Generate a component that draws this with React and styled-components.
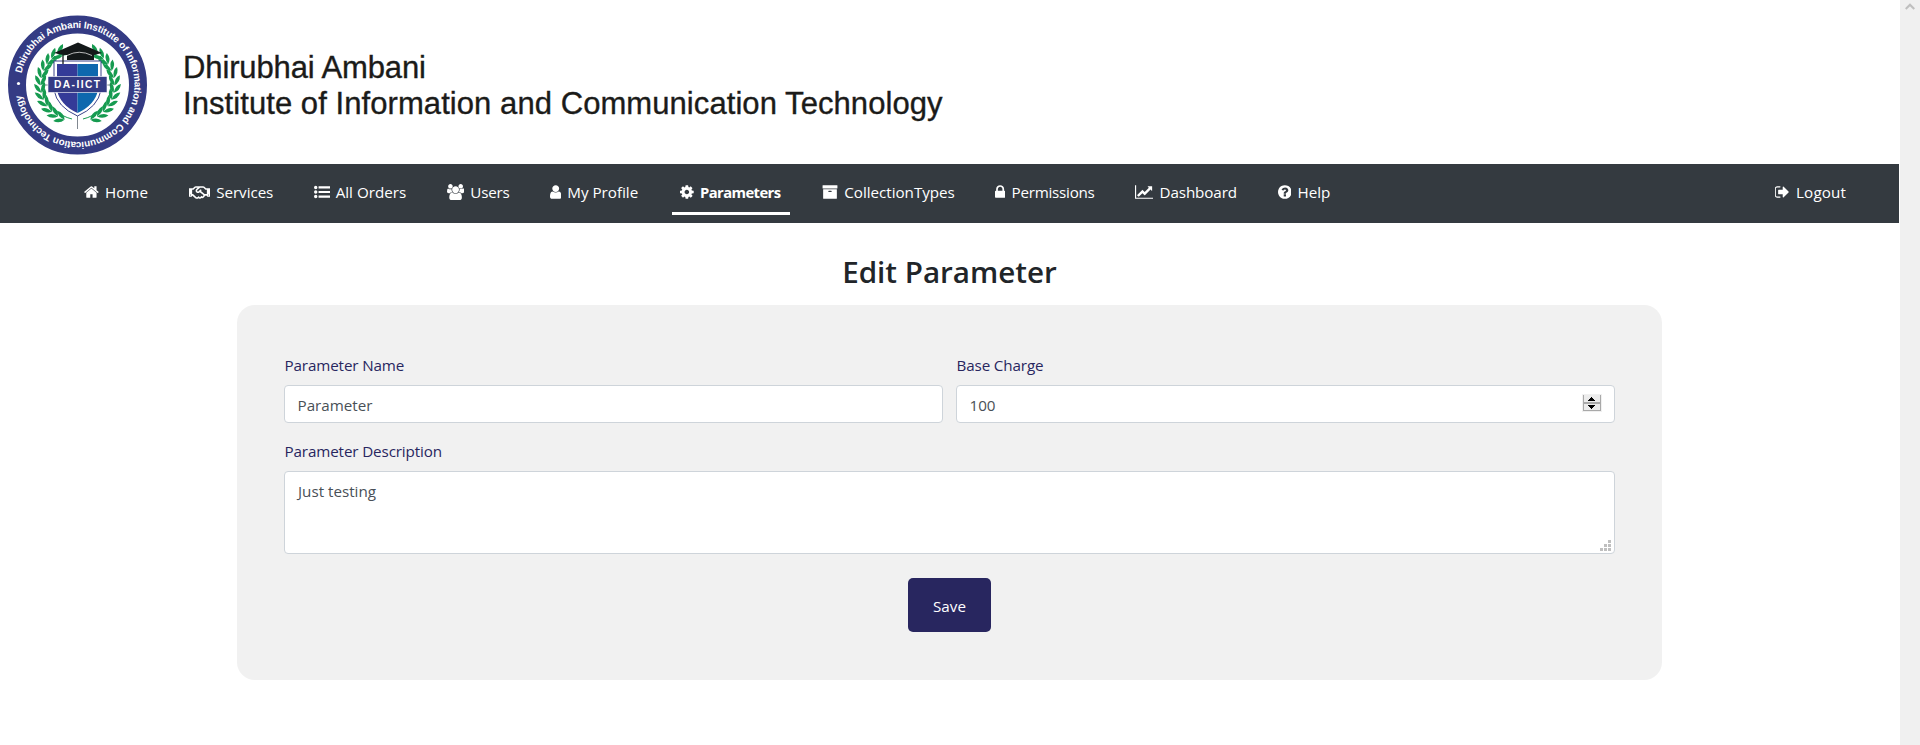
import React from "react";
import styled, { createGlobalStyle } from "styled-components";
import { FaRegHandshake } from "react-icons/fa";

const GlobalStyle = createGlobalStyle`
  *, *::before, *::after { box-sizing: border-box; }
  body {
    margin: 0;
    background: #fff;
    color: #212529;
    font-family: "Segoe UI", "Open Sans", "Noto Sans", sans-serif;
    font-size: 15.2px;
    line-height: 24px;
    overflow: hidden;
  }
`;

const Shell = styled.div`
  display: flex;
  height: 745px;
`;

const Page = styled.div`
  flex: 1;
  min-width: 0;
`;

const ScrollTrack = styled.div`
  display: flex;
  justify-content: center;
  flex: 0 0 21px;
  padding-top: 3px;
  background: #f0f0f0;
  border-left: 1px solid #fff;
`;

const Header = styled.header`
  display: flex;
  height: 164px;
`;

const Emblem = styled.svg`
  flex: 0 0 160px;
  height: 164px;
`;

const SchoolName = styled.h1`
  margin: 50px 0 0 23px;
  color: #1b1b19;
  font: 400 31px/35.5px "Liberation Sans", Arial, sans-serif;
  -webkit-text-stroke: 0.35px #1b1b19;
  white-space: nowrap;
`;

const NameLine = styled.span`
  display: block;
  letter-spacing: ${(p) => p.$spacing}px;
`;

const Nav = styled.nav`
  display: flex;
  gap: 24px;
  height: 59px;
  padding: 8px 43px 8px 76px;
  background: #343a40;
`;

const NavLink = styled.a`
  display: flex;
  align-items: center;
  flex: 0 0 ${(p) => p.$width + 16}px;
  height: 43px;
  padding: 0 8px;
  margin-left: ${(p) => (p.$end ? "auto" : 0)};
  border-bottom: 3px solid ${(p) => (p.$active ? "#fff" : "transparent")};
  color: #fff;
  font-weight: ${(p) => (p.$active ? 700 : 400)};
  font-size: ${(p) => (p.$active ? 14.8 : 15.2)}px;
  letter-spacing: ${(p) => p.$spacing || 0}px;
  line-height: 24px;
  white-space: nowrap;
  text-decoration: none;

  svg {
    flex: none;
    margin: 0 6.2px 0 0;
    fill: currentColor;
  }
`;

const Main = styled.main`
  padding: 29px 237px 0;
`;

const Heading = styled.h2`
  margin: 0 0 14px;
  font-size: 29.6px;
  font-weight: 600;
  line-height: 39px;
  text-align: center;
`;

const Card = styled.form`
  display: grid;
  grid-template-columns: 1fr 1fr;
  column-gap: 13px;
  row-gap: 16px;
  height: 375px;
  align-content: start;
  padding: 48px 47px;
  border-radius: 18px;
  background: #f1f1f1;
`;

const Field = styled.div`
  display: flex;
  flex-direction: column;
  grid-column: ${(p) => (p.$wide ? "1 / -1" : "auto")};
`;

const Label = styled.label`
  height: 24px;
  margin-bottom: 8px;
  padding-left: 0.5px;
  color: #28265f;
  letter-spacing: -0.12px;
`;

const Control = styled.div`
  display: flex;
  justify-content: space-between;
  align-items: ${(p) => (p.$area ? "flex-start" : "center")};
  height: ${(p) => (p.$area ? 83 : 38)}px;
  padding: ${(p) => (p.$area ? "7px 3px 2px 13px" : "1px 12px 0 12.500px")};
  border: 1px solid #ced4da;
  border-radius: 4px;
  background: #fff;
  color: #495057;
`;

const Grip = styled.svg`
  align-self: flex-end;
`;

const Spinner = styled.svg`
  margin-top: -3px;
`;

const SaveButton = styled.button`
  grid-column: 1 / -1;
  justify-self: center;
  width: 83px;
  height: 54px;
  margin-top: 8px;
  padding: 2px 0 0;
  border: 0;
  border-radius: 5px;
  background: #28265f;
  color: #fff;
  font: inherit;
`;

const icons = {
  home: { x: 64, w: 1664, d: "M1472 992v480q0 26-19 45t-45 19h-384v-384h-256v384h-384q-26 0-45-19t-19-45v-480q0-1 .5-3t.5-3l575-474 575 474q1 2 1 6zm223-69l-62 74q-8 9-21 11h-3q-13 0-21-7l-692-577-692 577q-12 8-24 7-13-2-21-11l-62-74q-8-10-7-23.5t11-21.5l719-599q32-26 76-26t76 26l244 204v-195q0-14 9-23t23-9h192q14 0 23 9t9 23v408l219 182q10 8 11 21.5t-7 23.5z" },
  list: { x: 0, w: 1792, d: "M0 384a192 192 0 1 0 384 0a192 192 0 1 0-384 0M0 896a192 192 0 1 0 384 0a192 192 0 1 0-384 0M0 1408a192 192 0 1 0 384 0a192 192 0 1 0-384 0M512 264h1280v240h-1280zM512 776h1280v240h-1280zM512 1288h1280v240h-1280z" },
  users: { x: -64, w: 1920, d: "M529 896q-162 5-265 128h-134q-82 0-138-40.5t-56-118.5q0-353 124-353 6 0 43.5 21t97.5 42.5 119 21.5q67 0 133-23-5 37-5 66 0 159 90 294zm1071 637q0 120-73 189.5t-194 69.5h-874q-121 0-194-69.5t-73-189.5q0-53 3.5-103.5t14-109 26.5-108.5 43-97.5 62-81 85.5-53.5 111.5-20q10 0 43 21.5t73 48 107 48 135 21.5 135-21.5 107-48 73-48 43-21.5q61 0 111.5 20t85.5 53.5 62 81 43 97.5 26.5 108.5 14 109 3.5 103.5zm-1024-1277q0 106-75 181t-181 75-181-75-75-181 75-181 181-75 181 75 75 181zm704 384q0 159-112.5 271.5t-271.5 112.5-271.5-112.5-112.5-271.5 112.5-271.5 271.5-112.5 271.5 112.5 112.5 271.5zm576 225q0 78-56 118.5t-138 40.5h-134q-103-123-265-128 90-135 90-294 0-29-5-66 66 23 133 23 59 0 119-21.5t97.5-42.5 43.5-21q124 0 124 353zm-128-609q0 106-75 181t-181 75-181-75-75-181 75-181 181-75 181 75 75 181z" },
  user: { x: 256, w: 1280, d: "M1536 1399q0 109-62.5 187t-150.5 78h-854q-88 0-150.5-78t-62.5-187q0-85 8.5-160.5t31.5-152 58.5-131 94-89 134.5-34.5q131 128 313 128t313-128q76 0 134.5 34.5t94 89 58.5 131 31.5 152 8.5 160.5zm-256-887q0 159-112.5 271.5t-271.5 112.5-271.5-112.5-112.5-271.5 112.5-271.5 271.5-112.5 271.5 112.5 112.5 271.5z" },
  cog: { x: 128, w: 1536, d: "M1152 896q0-106-75-181t-181-75-181 75-75 181 75 181 181 75 181-75 75-181zm512-109v222q0 12-8 23t-20 13l-185 28q-19 54-39 91 35 50 107 138 10 12 10 25t-9 23q-27 37-99 108t-94 71q-12 0-26-9l-138-108q-44 23-91 38-16 136-29 186-7 28-36 28h-222q-14 0-24.5-8.5t-11.5-21.5l-28-184q-49-16-90-37l-141 107q-10 9-25 9-14 0-25-11-126-114-165-168-7-10-7-23 0-12 8-23 15-21 51-66.5t54-70.5q-27-50-41-99l-183-27q-13-2-21-12.5t-8-23.5v-222q0-12 8-23t19-13l186-28q14-46 39-92-40-57-107-138-10-12-10-24 0-10 9-23 26-36 98.5-107.5t94.5-71.5q13 0 26 10l138 107q44-23 91-38 16-136 29-186 7-28 36-28h222q14 0 24.5 8.5t11.5 21.5l28 184q49 16 90 37l142-107q9-9 24-9 13 0 25 10 129 119 165 170 7 8 7 22 0 12-8 23-15 21-51 66.5t-54 70.5q26 50 41 98l183 28q13 2 21 12.5t8 23.5z" },
  archive: { x: 0, w: 1792, d: "M1088 832q0-26-19-45t-45-19h-256q-26 0-45 19t-19 45 19 45 45 19h256q26 0 45-19t19-45zm576-192v960q0 26-19 45t-45 19h-1408q-26 0-45-19t-19-45v-960q0-26 19-45t45-19h1408q26 0 45 19t19 45zm64-448v256q0 26-19 45t-45 19h-1536q-26 0-45-19t-19-45v-256q0-26 19-45t45-19h1536q26 0 45 19t19 45z" },
  lock: { x: 320, w: 1152, d: "M640 768h512v-192q0-106-75-181t-181-75-181 75-75 181v192zm832 96v576q0 40-28 68t-68 28h-960q-40 0-68-28t-28-68v-576q0-40 28-68t68-28h32v-192q0-184 132-316t316-132 316 132 132 316v192h32q40 0 68 28t28 68z" },
  chart: { x: -128, w: 2048, d: "M1920 1536v128h-2048v-1536h128v1408h1920zm-128-1248v435q0 21-19.5 29.5t-35.5-7.5l-121-121-633 633q-10 10-23 10t-23-10l-233-233-416 416-192-192 585-585q10-10 23-10t23 10l233 233 464-464-121-121q-16-16-7.5-35.5t29.5-19.5h435q14 0 23 9t9 23z" },
  help: { x: 128, w: 1536, d: "M1024 1376v-192q0-14-9-23t-23-9h-192q-14 0-23 9t-9 23v192q0 14 9 23t23 9h192q14 0 23-9t9-23zm256-672q0-88-55.5-163t-138.5-116-170-41q-243 0-371 213-15 24 8 42l132 100q7 6 19 6 16 0 25-12 53-68 86-92 34-24 86-24 48 0 85.5 26t37.5 59q0 38-20 61t-68 45q-63 28-115.5 86.5t-52.5 125.5v36q0 14 9 23t23 9h192q14 0 23-9t9-23q0-19 21.5-49.5t54.5-49.5q32-18 49-28.5t46-35 44.5-48 28-60.5 12.5-81zm384 192q0 209-103 385.5t-279.5 279.5-385.5 103-385.5-103-279.5-279.5-103-385.5 103-385.5 279.5-279.5 385.5-103 385.5 103 279.5 279.5 103 385.5z" },
  logout: { x: 96, w: 1664, d: "M704 1440q0 4 1 20t.5 26.5-3 23.5-10 19.5-20.5 6.5h-320q-119 0-203.5-84.5t-84.5-203.5v-704q0-119 84.5-203.5t203.5-84.5h320q13 0 22.5 9.5t9.5 22.5q0 4 1 20t.5 26.5-3 23.5-10 19.5-20.5 6.5h-320q-66 0-113 47t-47 113v704q0 66 47 113t113 47h312l11.5 1 11.5 3 8 5.5 7 9 2 13.5zm928-544q0 26-19 45l-544 544q-19 19-45 19t-45-19-19-45v-288h-448q-26 0-45-19t-19-45v-384q0-26 19-45t45-19h448v-288q0-26 19-45t45-19 45 19l544 544q19 19 19 45z" },
};

function Icon({ name }) {
  if (name === "handshake") return <FaRegHandshake size={21} />;
  const { x, w, d } = icons[name];
  return (
    <svg width={(w * 16) / 1792} height="16" viewBox={`${x} 0 ${w} 1792`}>
      <path d={d} />
    </svg>
  );
}

const links = [
  { icon: "home", text: "Home", width: 65 },
  { icon: "handshake", text: "Services", width: 84.5, spacing: -0.05 },
  { icon: "list", text: "All Orders", width: 93.5 },
  { icon: "users", text: "Users", width: 62.5, spacing: -0.2 },
  { icon: "user", text: "My Profile", width: 90.5 },
  { icon: "cog", text: "Parameters", width: 102, active: true, spacing: -0.6 },
  { icon: "archive", text: "CollectionTypes", width: 133, spacing: -0.03 },
  { icon: "lock", text: "Permissions", width: 100, spacing: -0.25 },
  { icon: "chart", text: "Dashboard", width: 102.5, spacing: -0.12 },
  { icon: "help", text: "Help", width: 54 },
  { icon: "logout", text: "Logout", width: 73, end: true, spacing: 0.15 },
];

// Leaf positions down the left branch of the laurel; the right branch mirrors it.
const leaves = Array.from({ length: 12 }, (_, i) => {
  const a = ((112 + i * 11.5) * Math.PI) / 180;
  return { x: 77.5 + 37 * Math.cos(a), y: 85 + 37 * Math.sin(a), deg: (a * 180) / Math.PI + 90 };
});

function Branch() {
  return (
    <g fill="#169b50">
      <path d="M72 119A37 37 0 0 1 55 56" fill="none" stroke="#169b50" strokeWidth="1" />
      {leaves.map((l) => (
        <g key={l.deg} transform={`translate(${l.x} ${l.y}) rotate(${l.deg})`}>
          <path d="M-1 0Q2-6 9-5.500Q7 0 -1 0Z" />
          <path d="M-1 0Q2 6 9 5.500Q7 0 -1 0Z" />
        </g>
      ))}
    </g>
  );
}

function Logo() {
  return (
    <Emblem width="160" height="164" viewBox="0 0 160 164">
      <defs>
        <path id="ring" d="M20.500 85A57 57 0 0 1 134.500 85A57 57 0 0 1 20.500 85" />
      </defs>
      <circle cx="77.500" cy="85" r="60.500" fill="#fff" stroke="#343b84" strokeWidth="18" />
      <text fill="#fff" fontFamily="Liberation Sans, Arial, sans-serif" fontWeight="700" fontSize="9.800">
        <textPath href="#ring" startOffset="11.500" textLength="336" lengthAdjust="spacing">
          Dhirubhai Ambani Institute of Information and Communication Technology
        </textPath>
      </text>
      <circle cx="18.500" cy="83.500" r="1.600" fill="#fff" />
      <Branch />
      <g transform="translate(155 0) scale(-1 1)">
        <Branch />
      </g>
      <path d="M77.500 112V129M45 85H111" stroke="#4a5560" strokeWidth="0.700" />
      <path d="M54 61H101V90Q98 107 77.500 116Q57 107 54 90Z" fill="#fff" stroke="#3b4389" strokeWidth="1" />
      <path d="M57 64H77.500V113Q60 105 57 90Z" fill="#343b98" />
      <path d="M77.500 64H98V90Q95 105 77.500 113Z" fill="#0d68ae" />
      <path d="M78 42.500L102 53L94 55V60H67V55L61 54.500L54 53Z" fill="#131819" />
      <path d="M67 55.500Q79 49 92 55.500" fill="none" stroke="#fff" strokeWidth="0.700" />
      <path d="M78 50L63 55V64" fill="none" stroke="#131819" strokeWidth="1.300" />
      <rect x="48" y="76.500" width="59" height="16" fill="#343b84" stroke="#fff" strokeWidth="0.600" />
      <text x="54" y="87.800" fill="#fff" fontFamily="Liberation Sans, Arial, sans-serif" fontWeight="700" fontSize="10.200" textLength="46">
        DA-IICT
      </text>
    </Emblem>
  );
}

export default function App() {
  return (
    <>
      <GlobalStyle />
      <Shell>
        <Page>
          <Header>
            <Logo />
            <SchoolName>
              <NameLine $spacing={-0.12}>Dhirubhai Ambani</NameLine>
              <NameLine $spacing={0.07}>Institute of Information and Communication Technology</NameLine>
            </SchoolName>
          </Header>
          <Nav>
            {links.map((l) => (
              <NavLink key={l.text} $width={l.width} $active={l.active} $end={l.end} $spacing={l.spacing}>
                <Icon name={l.icon} />
                {l.text}
              </NavLink>
            ))}
          </Nav>
          <Main>
            <Heading>Edit Parameter</Heading>
            <Card>
              <Field>
                <Label>Parameter Name</Label>
                <Control>Parameter</Control>
              </Field>
              <Field>
                <Label>Base Charge</Label>
                <Control>
                  100
                  <Spinner width="20" height="18" viewBox="0 0 20 18" shapeRendering="crispEdges">
                    <rect width="20" height="18" fill="#f0f0f0" />
                    <path d="M1.500 1V16.500H18.500V1" fill="#ececec" stroke="#a9a9a9" />
                    <rect x="1" y="8" width="18" height="2" fill="#a9a9a9" />
                    <path d="M6 7V6H7V5H8V4H9V3H10V4H11V5H12V6H13V7ZM6 11H13V12H12V13H11V14H10V15H9V14H8V13H7V12H6Z" fill="#000" />
                  </Spinner>
                </Control>
              </Field>
              <Field $wide>
                <Label>Parameter Description</Label>
                <Control $area>
                  Just testing
                  <Grip width="11" height="11" viewBox="0 0 11 11">
                    <path d="M8 0h3v3h-3zM4 4h3v3h-3zM8 4h3v3h-3zM0 8h3v3h-3zM4 8h3v3h-3zM8 8h3v3h-3z" fill="#bfbfbf" />
                  </Grip>
                </Control>
              </Field>
              <SaveButton type="button">Save</SaveButton>
            </Card>
          </Main>
        </Page>
        <ScrollTrack>
          <svg width="10" height="7" viewBox="0 0 10 7">
            <path d="M0.700 6L5 1.700L9.300 6" fill="none" stroke="#bfbfbf" strokeWidth="2.200" />
          </svg>
        </ScrollTrack>
      </Shell>
    </>
  );
}
